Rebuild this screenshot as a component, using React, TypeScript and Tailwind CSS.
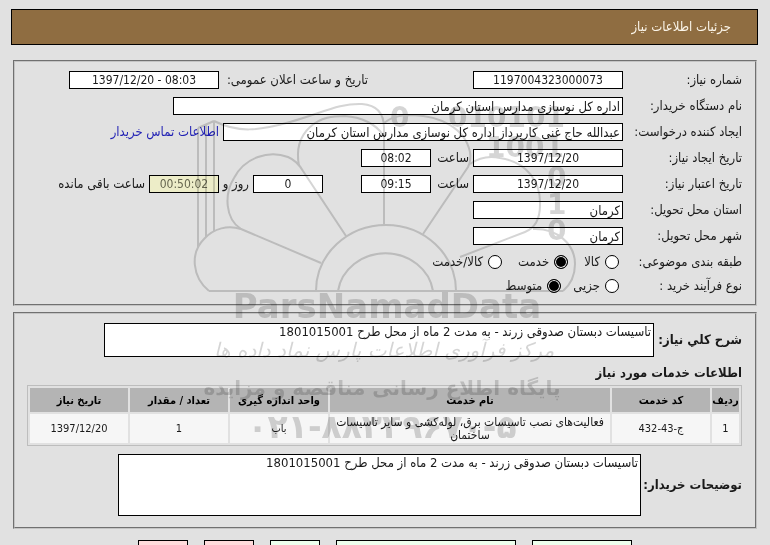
import type { ReactNode } from 'react'

const fontClass = "font-['DejaVu_Sans_Condensed','DejaVu_Sans',sans-serif]"

const serviceRows = [
  {
    index: '1',
    code: 'ج-43-432',
    name: 'فعالیت‌های نصب تاسیسات برق، لوله‌کشی و سایر تاسیسات ساختمان',
    unit: 'باب',
    amount: '1',
    date: '1397/12/20',
  },
]

const description = 'تاسیسات دبستان صدوقی زرند - به مدت 2 ماه از محل طرح 1801015001'

export default function App() {
  return (
    <div
      dir="rtl"
      className={`relative h-screen overflow-hidden bg-[#e1e1e1] pt-[9px] pr-3 pl-[11px] text-[13px] leading-4 text-[#1a1a1a] ${fontClass}`}
    >
      <header className="flex h-9 items-center border border-black bg-[#8f6d41] px-[26px] text-[#fbf5e9]">
        <h1>جزئیات اطلاعات نیاز</h1>
      </header>

      <main className="pr-px pl-[2px]">
        <Panel className="mt-[15px] pt-[5px] pb-[7px]">
          <Row label="شماره نیاز:" id="need-number">
            <NumberField id="need-number" value="1197004323000073" className="w-[150px]" />
            <div className="flex w-[254px] justify-end">
              <label htmlFor="announce-date" className="w-[149px] whitespace-nowrap">
                تاریخ و ساعت اعلان عمومی:
              </label>
            </div>
            <NumberField id="announce-date" value="1397/12/20 - 08:03" className="w-[150px]" />
          </Row>
          <Row label="نام دستگاه خریدار:" id="buyer-org">
            <TextField id="buyer-org" value="اداره کل نوسازی مدارس استان کرمان" className="w-[450px]" />
          </Row>
          <Row label="ایجاد کننده درخواست:" id="requester">
            <TextField
              id="requester"
              value="عبدالله حاج غنی کارپرداز اداره کل نوسازی مدارس استان کرمان"
              className="w-[400px]"
            />
            <a href="#contact" className="mr-1 whitespace-nowrap text-[#1f1fb4]">
              اطلاعات تماس خریدار
            </a>
          </Row>
          <Row label="تاریخ ایجاد نیاز:" id="created-date">
            <NumberField id="created-date" value="1397/12/20" className="w-[150px]" />
            <label htmlFor="created-time" className="w-[42px] pr-1">
              ساعت
            </label>
            <NumberField id="created-time" value="08:02" className="w-[70px]" />
          </Row>
          <Row label="تاریخ اعتبار نیاز:" id="valid-date">
            <NumberField id="valid-date" value="1397/12/20" className="w-[150px]" />
            <label htmlFor="valid-time" className="w-[42px] pr-1">
              ساعت
            </label>
            <NumberField id="valid-time" value="09:15" className="w-[70px]" />
            <NumberField id="days-left" value="0" className="mr-[38px] w-[70px]" />
            <label htmlFor="days-left" className="w-[34px] pr-1 whitespace-nowrap">
              روز و
            </label>
            <NumberField id="time-left" value="00:50:02" className="w-[70px]" highlighted />
            <label htmlFor="time-left" className="pr-1 whitespace-nowrap">
              ساعت باقی مانده
            </label>
          </Row>
          <Row label="استان محل تحویل:" id="province">
            <TextField id="province" value="کرمان" className="w-[150px]" />
          </Row>
          <Row label="شهر محل تحویل:" id="city">
            <TextField id="city" value="کرمان" className="w-[150px]" />
          </Row>
          <div role="radiogroup" aria-labelledby="category" className="flex h-[26px] items-center">
            <span id="category" className="w-[123px] whitespace-nowrap">
              طبقه بندی موضوعی:
            </span>
            <div className="flex gap-4">
              <Radio name="category" label="کالا" />
              <Radio name="category" label="خدمت" checked />
              <Radio name="category" label="کالا/خدمت" />
            </div>
          </div>
          <div role="radiogroup" aria-labelledby="process" className="flex h-[22px] items-center">
            <span id="process" className="w-[123px] whitespace-nowrap">
              نوع فرآیند خرید :
            </span>
            <div className="flex gap-3">
              <Radio name="process" label="جزیی" />
              <Radio name="process" label="متوسط" checked />
            </div>
          </div>
        </Panel>

        <Panel className="mt-[6px] pt-[9px] pb-[11px]">
          <div className="flex items-center">
            <label htmlFor="summary" className="w-[88px] font-bold whitespace-nowrap">
              شرح کلي نیاز:
            </label>
            <textarea
              id="summary"
              readOnly
              defaultValue={description}
              className="h-[34px] w-[550px] resize-none overflow-hidden border border-black bg-white px-[2px]"
            />
          </div>
          <h2 className="mt-2 mb-1 font-bold">اطلاعات خدمات مورد نیاز</h2>
          <ServicesTable />
          <div className="mt-2 flex items-center">
            <label htmlFor="buyer-notes" className="w-[101px] font-bold whitespace-nowrap">
              توضیحات خریدار:
            </label>
            <textarea
              id="buyer-notes"
              readOnly
              defaultValue={description}
              className="h-[62px] w-[523px] resize-none overflow-hidden border border-black bg-white px-[2px]"
            />
          </div>
        </Panel>
      </main>

      <footer className="mt-[11px] flex justify-center gap-4">
        <button type="button" className="h-6 w-[100px] border border-black bg-[#edffed]" />
        <button type="button" className="h-6 w-[180px] border border-black bg-[#edffed]" />
        <button type="button" className="h-6 w-[50px] border border-black bg-[#edffed]" />
        <button type="button" className="h-6 w-[50px] border border-black bg-[#ffdcdc]" />
        <button type="button" className="h-6 w-[50px] border border-black bg-[#ffdcdc]" />
      </footer>

      <Watermark />
    </div>
  )
}

function Panel({ className, children }: { className: string; children: ReactNode }) {
  return (
    <section className={`border-2 border-[#c4c4c4] pr-[13px] pl-3 [border-style:groove] ${className}`}>
      {children}
    </section>
  )
}

function Row({ label, id, children }: { label: string; id: string; children: ReactNode }) {
  return (
    <div className="flex h-[26px] items-center">
      <label htmlFor={id} className="w-[119px] shrink-0 whitespace-nowrap">
        {label}
      </label>
      {children}
    </div>
  )
}

interface FieldProps {
  id: string
  value: string
  className: string
  highlighted?: boolean
}

function TextField({ id, value, className }: FieldProps) {
  return (
    <input
      id={id}
      type="text"
      readOnly
      defaultValue={value}
      className={`h-[18px] shrink-0 border border-black bg-white px-[2px] ${className}`}
    />
  )
}

function NumberField({ id, value, className, highlighted }: FieldProps) {
  const color = highlighted ? 'bg-[#ededc8] text-[#66664f]' : 'bg-white'

  return (
    <input
      id={id}
      type="text"
      dir="ltr"
      readOnly
      defaultValue={value}
      className={`h-[18px] shrink-0 border border-black px-[2px] text-center text-[12px] ${color} ${className}`}
    />
  )
}

function Radio({ name, label, checked }: { name: string; label: string; checked?: boolean }) {
  return (
    <label className="flex items-center gap-[5px] whitespace-nowrap">
      <input
        type="radio"
        name={name}
        defaultChecked={checked}
        className="h-[14px] w-[14px] appearance-none rounded-full border border-black bg-white checked:bg-black checked:shadow-[inset_0_0_0_1px_#fff]"
      />
      {label}
    </label>
  )
}

function ServicesTable() {
  return (
    <table className="w-full table-fixed border-separate border-spacing-[2px] border border-[#bdbdbd] text-center text-[11px] leading-[13px]">
      <thead>
        <tr className="h-6 bg-[#b4b4b4] text-black">
          <th className="w-[27px] whitespace-nowrap">ردیف</th>
          <th className="w-[98px]">کد خدمت</th>
          <th>نام خدمت</th>
          <th className="w-[98px] whitespace-nowrap">واحد اندازه گیری</th>
          <th className="w-[98px]">تعداد / مقدار</th>
          <th className="w-[98px]">تاریخ نیاز</th>
        </tr>
      </thead>
      <tbody>
        {serviceRows.map((row) => (
          <tr key={row.index} className="h-[29px] bg-[#f6f6f6]">
            <td>{row.index}</td>
            <td>{row.code}</td>
            <td className="text-[12px] leading-[13px]">{row.name}</td>
            <td>{row.unit}</td>
            <td>{row.amount}</td>
            <td>{row.date}</td>
          </tr>
        ))}
      </tbody>
    </table>
  )
}

function Watermark() {
  return (
    <svg
      aria-hidden="true"
      className="pointer-events-none absolute top-[95px] left-[185px] h-[355px] w-[400px] opacity-25 mix-blend-multiply"
      viewBox="185 95 400 355"
      fill="none"
      stroke="#555"
      strokeWidth={2}
      direction="ltr"
    >
      <path d="M198 247V128M206 237V125M214 231V121M198 128L214 121" />
      <path d="M214 121C238 133 258 131 290 122C322 113 340 103 362 104C377 105 384 114 384 128V225" />
      <path d="M209 291C192 277 190 253 204 239C214 228 228 225 241 229L321 263" />
      <path d="M241 229C225 219 224 194 234 178C245 157 269 150 288 157C295 160 299 164 303 171L346 236" />
      <path d="M299 166C296 150 299 137 310 127C321 117 333 116 345 116C361 117 376 124 383 135" />
      <path d="M384 123C393 116 402 115 413 115C440 116 465 128 470 152C471 158 470 163 468 167L423 234" />
      <path d="M470 164C480 157 491 156 500 158C527 162 541 182 540 205C540 218 535 228 525 232L460 257" />
      <path d="M533 229C557 228 575 244 575 264C575 277 570 285 563 291" />
      <path d="M316 291A70 66 0 0 1 456 291M338 291A48 44 0 0 1 433 291M209 291H563" />
      <g fill="#555" stroke="none" fontFamily="'DejaVu Sans',sans-serif" fontWeight="bold">
        <g fontSize="28">
          <text x="390" y="127">
            0
          </text>
          <text x="448" y="127">
            010101
          </text>
          <text x="486" y="157">
            1001
          </text>
          <text x="547" y="187">
            0
          </text>
          <text x="547" y="214">
            1
          </text>
          <text x="547" y="240">
            0
          </text>
        </g>
        <text x="387" y="318" fontSize="34" textAnchor="middle">
          ParsNamadData
        </text>
        <text x="384" y="357" fontSize="20" fontStyle="italic" fontWeight="normal" textAnchor="middle" direction="rtl">
          مرکز فرآوری اطلاعات پارس نماد داده ها
        </text>
        <text x="382" y="395" fontSize="20" textAnchor="middle" direction="rtl">
          پایگاه اطلاع رسانی مناقصه و مزایده
        </text>
        <text x="382" y="438" fontSize="33" textAnchor="middle">
          ۰۲۱-۸۸۳۴۹۶۷۰-۵
        </text>
      </g>
    </svg>
  )
}
